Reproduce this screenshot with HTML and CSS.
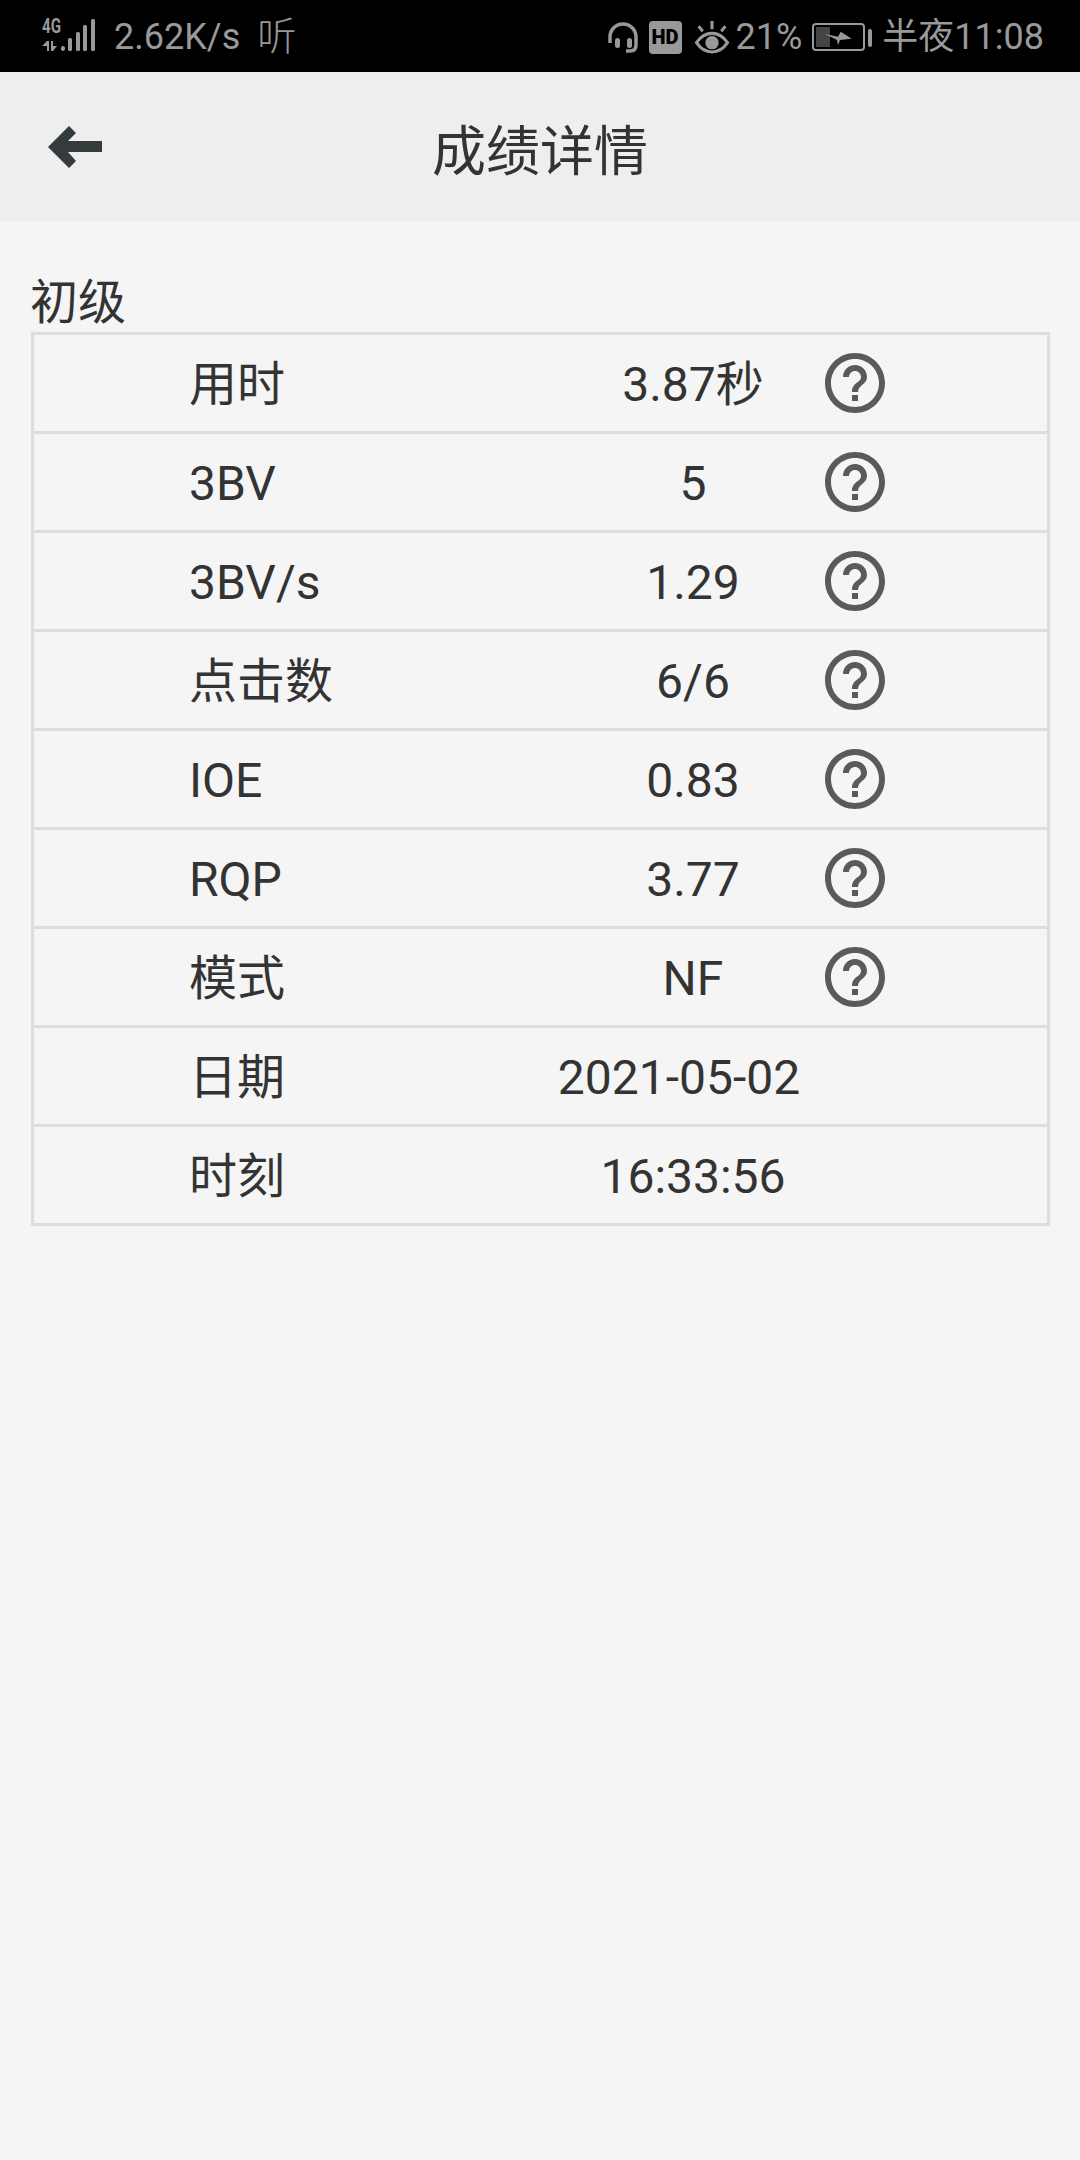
FILE: index.html
```html
<!DOCTYPE html>
<html lang="zh-CN">
<head>
  <meta charset="UTF-8" />
  <meta name="viewport" content="width=device-width, initial-scale=1" />
  <title>成绩详情</title>
  <link rel="stylesheet" href="styles.css">
</head>
<body>
  <!-- Shared help icon -->
  <svg class="icon-defs" width="0" height="0">
    <symbol id="help" viewBox="0 0 24 24">
      <path d="M11 18h2v-2h-2v2zm1-16C6.480 2 2 6.480 2 12s4.480 10 10 10 10-4.480 10-10S17.520 2 12 2zm0 18c-4.410 0-8-3.590-8-8s3.590-8 8-8 8 3.590 8 8-3.590 8-8 8zm0-14c-2.210 0-4 1.790-4 4h2c0-1.100.9-2 2-2s2 .9 2 2c0 2-3 1.750-3 5h2c0-2.250 3-2.500 3-5 0-2.210-1.790-4-4-4z"/>
    </symbol>
  </svg>

  <!-- Status bar -->
  <div class="status-bar">
    <div class="status-group">
      <svg class="signal-icon" width="54" height="38" viewBox="0 -5 54 38" fill="#999">
        <text x="0" y="14" class="signal-label" textLength="19" lengthAdjust="spacingAndGlyphs">4G</text>
        <path d="M0 27l5-5h2v10H5v-5zM9 22h2v5h4l-4 5H9z"/>
        <rect x="19" y="27" width="4" height="5" rx="2"/>
        <rect x="26" y="19" width="4" height="13" rx="1.500"/>
        <rect x="34" y="13" width="4" height="19" rx="1.500"/>
        <rect x="41" y="6" width="4" height="26" rx="1.500"/>
        <rect x="49" y="0" width="4" height="32" rx="1.500"/>
      </svg>
      <span class="net-speed">2.62K/s</span>
      <span class="net-app">听</span>
    </div>
    <div class="status-group">
      <svg class="headset-icon" width="30" height="31" viewBox="0 0 30 31" fill="none" stroke="#999" stroke-width="3.500">
        <path d="M2 21v-6a13 13 0 0 1 26 0v8c0 4-2 6-6 6h-4"/>
        <rect x="7" y="16" width="5" height="10" rx="2.500" fill="#999" stroke="none"/>
        <rect x="19" y="16" width="5" height="10" rx="2.500" fill="#999" stroke="none"/>
      </svg>
      <span class="hd-badge">HD</span>
      <svg class="eye-icon" width="36" height="33" viewBox="0 0 34 32" fill="none" stroke="#999" stroke-width="3">
        <path d="M2 21c4-6 9-9 15-9s11 3 15 9c-4 6-9 9-15 9S6 27 2 21z"/>
        <circle cx="17" cy="21" r="6.500" fill="#999" stroke="none"/>
        <path d="M17 0v8M4 5l4 5M30 5l-4 5"/>
      </svg>
      <span class="battery-pct">21%</span>
      <svg class="battery-icon" width="60" height="28" viewBox="0 0 60 28">
        <rect x="1" y="1" width="51" height="26" rx="3" fill="none" stroke="#999" stroke-width="2"/>
        <rect x="4" y="4" width="14" height="20" fill="#444"/>
        <path d="M13 11l13 2.700L28.700 8.700l11 7L28 17l-2 5.300-1-5.300z" fill="#999"/>
        <rect x="56" y="6" width="4" height="18" rx="2" fill="#999"/>
      </svg>
      <span class="clock">半夜11:08</span>
    </div>
  </div>

  <!-- Header -->
  <header class="app-header">
    <svg class="back-icon" width="54" height="42" viewBox="0 0 54 42">
      <path d="M0 21L21 0l7 7-8 8h34v11H20l8 9-7 7z" fill="#333b3d"/>
    </svg>
    <h1>成绩详情</h1>
  </header>

  <main class="content">
    <h2 class="level">初级</h2>
    <div class="score-table">
      <div class="score-row">
        <span class="score-name">用时</span>
        <span class="score-value">3.87秒</span>
        <svg class="help-icon"><use href="#help"/></svg>
      </div>
      <div class="score-row">
        <span class="score-name">3BV</span>
        <span class="score-value">5</span>
        <svg class="help-icon"><use href="#help"/></svg>
      </div>
      <div class="score-row">
        <span class="score-name">3BV/s</span>
        <span class="score-value">1.29</span>
        <svg class="help-icon"><use href="#help"/></svg>
      </div>
      <div class="score-row">
        <span class="score-name">点击数</span>
        <span class="score-value">6/6</span>
        <svg class="help-icon"><use href="#help"/></svg>
      </div>
      <div class="score-row">
        <span class="score-name">IOE</span>
        <span class="score-value">0.83</span>
        <svg class="help-icon"><use href="#help"/></svg>
      </div>
      <div class="score-row">
        <span class="score-name">RQP</span>
        <span class="score-value">3.77</span>
        <svg class="help-icon"><use href="#help"/></svg>
      </div>
      <div class="score-row">
        <span class="score-name">模式</span>
        <span class="score-value">NF</span>
        <svg class="help-icon"><use href="#help"/></svg>
      </div>
      <div class="score-row">
        <span class="score-name">日期</span>
        <span class="score-value score-date">2021-05-02</span>
      </div>
      <div class="score-row">
        <span class="score-name">时刻</span>
        <span class="score-value">16:33:56</span>
      </div>
    </div>
  </main>
</body>
</html>
```
FILE: styles.css
```css
* {
  box-sizing: border-box;
}

body {
  margin: 0;
  min-height: 2160px;
  background: #f5f5f5;
  color: #333;
  font-family: Roboto, "Noto Sans CJK SC", sans-serif;
}

.icon-defs {
  display: block;
  height: 0;
}

/* Status bar */
.status-bar {
  display: flex;
  justify-content: space-between;
  align-items: center;
  height: 72px;
  padding: 2px 36px 0 42px;
  background: #000;
  color: #999;
  font-size: 36px;
  line-height: 40px;
}

.status-group {
  display: flex;
  align-items: center;
}

.signal-icon {
  margin-bottom: 8px;
}

.signal-label {
  font-size: 20px;
  font-weight: 700;
}

.net-speed {
  margin-left: 18px;
}

.net-app {
  margin-left: 17px;
  font-size: 39px;
  font-weight: 300;
}

.hd-badge {
  width: 33px;
  height: 33px;
  margin-left: 11px;
  border-radius: 4px;
  background: #999;
  color: #000;
  font-size: 20px;
  font-weight: 900;
  line-height: 33px;
  text-align: center;
}

.eye-icon {
  margin-left: 12px;
}

.battery-pct {
  margin-left: 6px;
}

.battery-icon {
  margin-left: 10px;
}

.clock {
  margin-left: 10px;
}

/* Header */
.app-header {
  display: grid;
  grid-template-columns: 1fr auto 1fr;
  align-items: center;
  height: 150px;
  padding-left: 48px;
  background: #eee;
}

.app-header h1 {
  margin: 0 0 0 -48px;
  font-size: 54px;
  font-weight: 400;
}

/* Score table */
.content {
  padding: 51px 30px 0 31px;
}

.level {
  margin: 0 0 0 -1px;
  font-size: 48px;
  font-weight: 400;
  line-height: 59px;
}

.score-table {
  border: 3px solid #ddd;
  border-top: 0;
}

.score-row {
  display: flex;
  align-items: center;
  height: 99px;
  padding-left: 155px;
  border-top: 3px solid #ddd;
  font-size: 48px;
  line-height: 60px;
}

.score-name,
.score-value {
  padding-top: 3px;
}

.score-name {
  width: 371px;
}

.score-value {
  width: 266px;
  text-align: center;
  white-space: nowrap;
}

.score-date {
  margin-left: -14px;
}

.help-icon {
  flex: none;
  width: 72px;
  height: 72px;
  margin-left: -7px;
  fill: #5a5a5a;
}
```
